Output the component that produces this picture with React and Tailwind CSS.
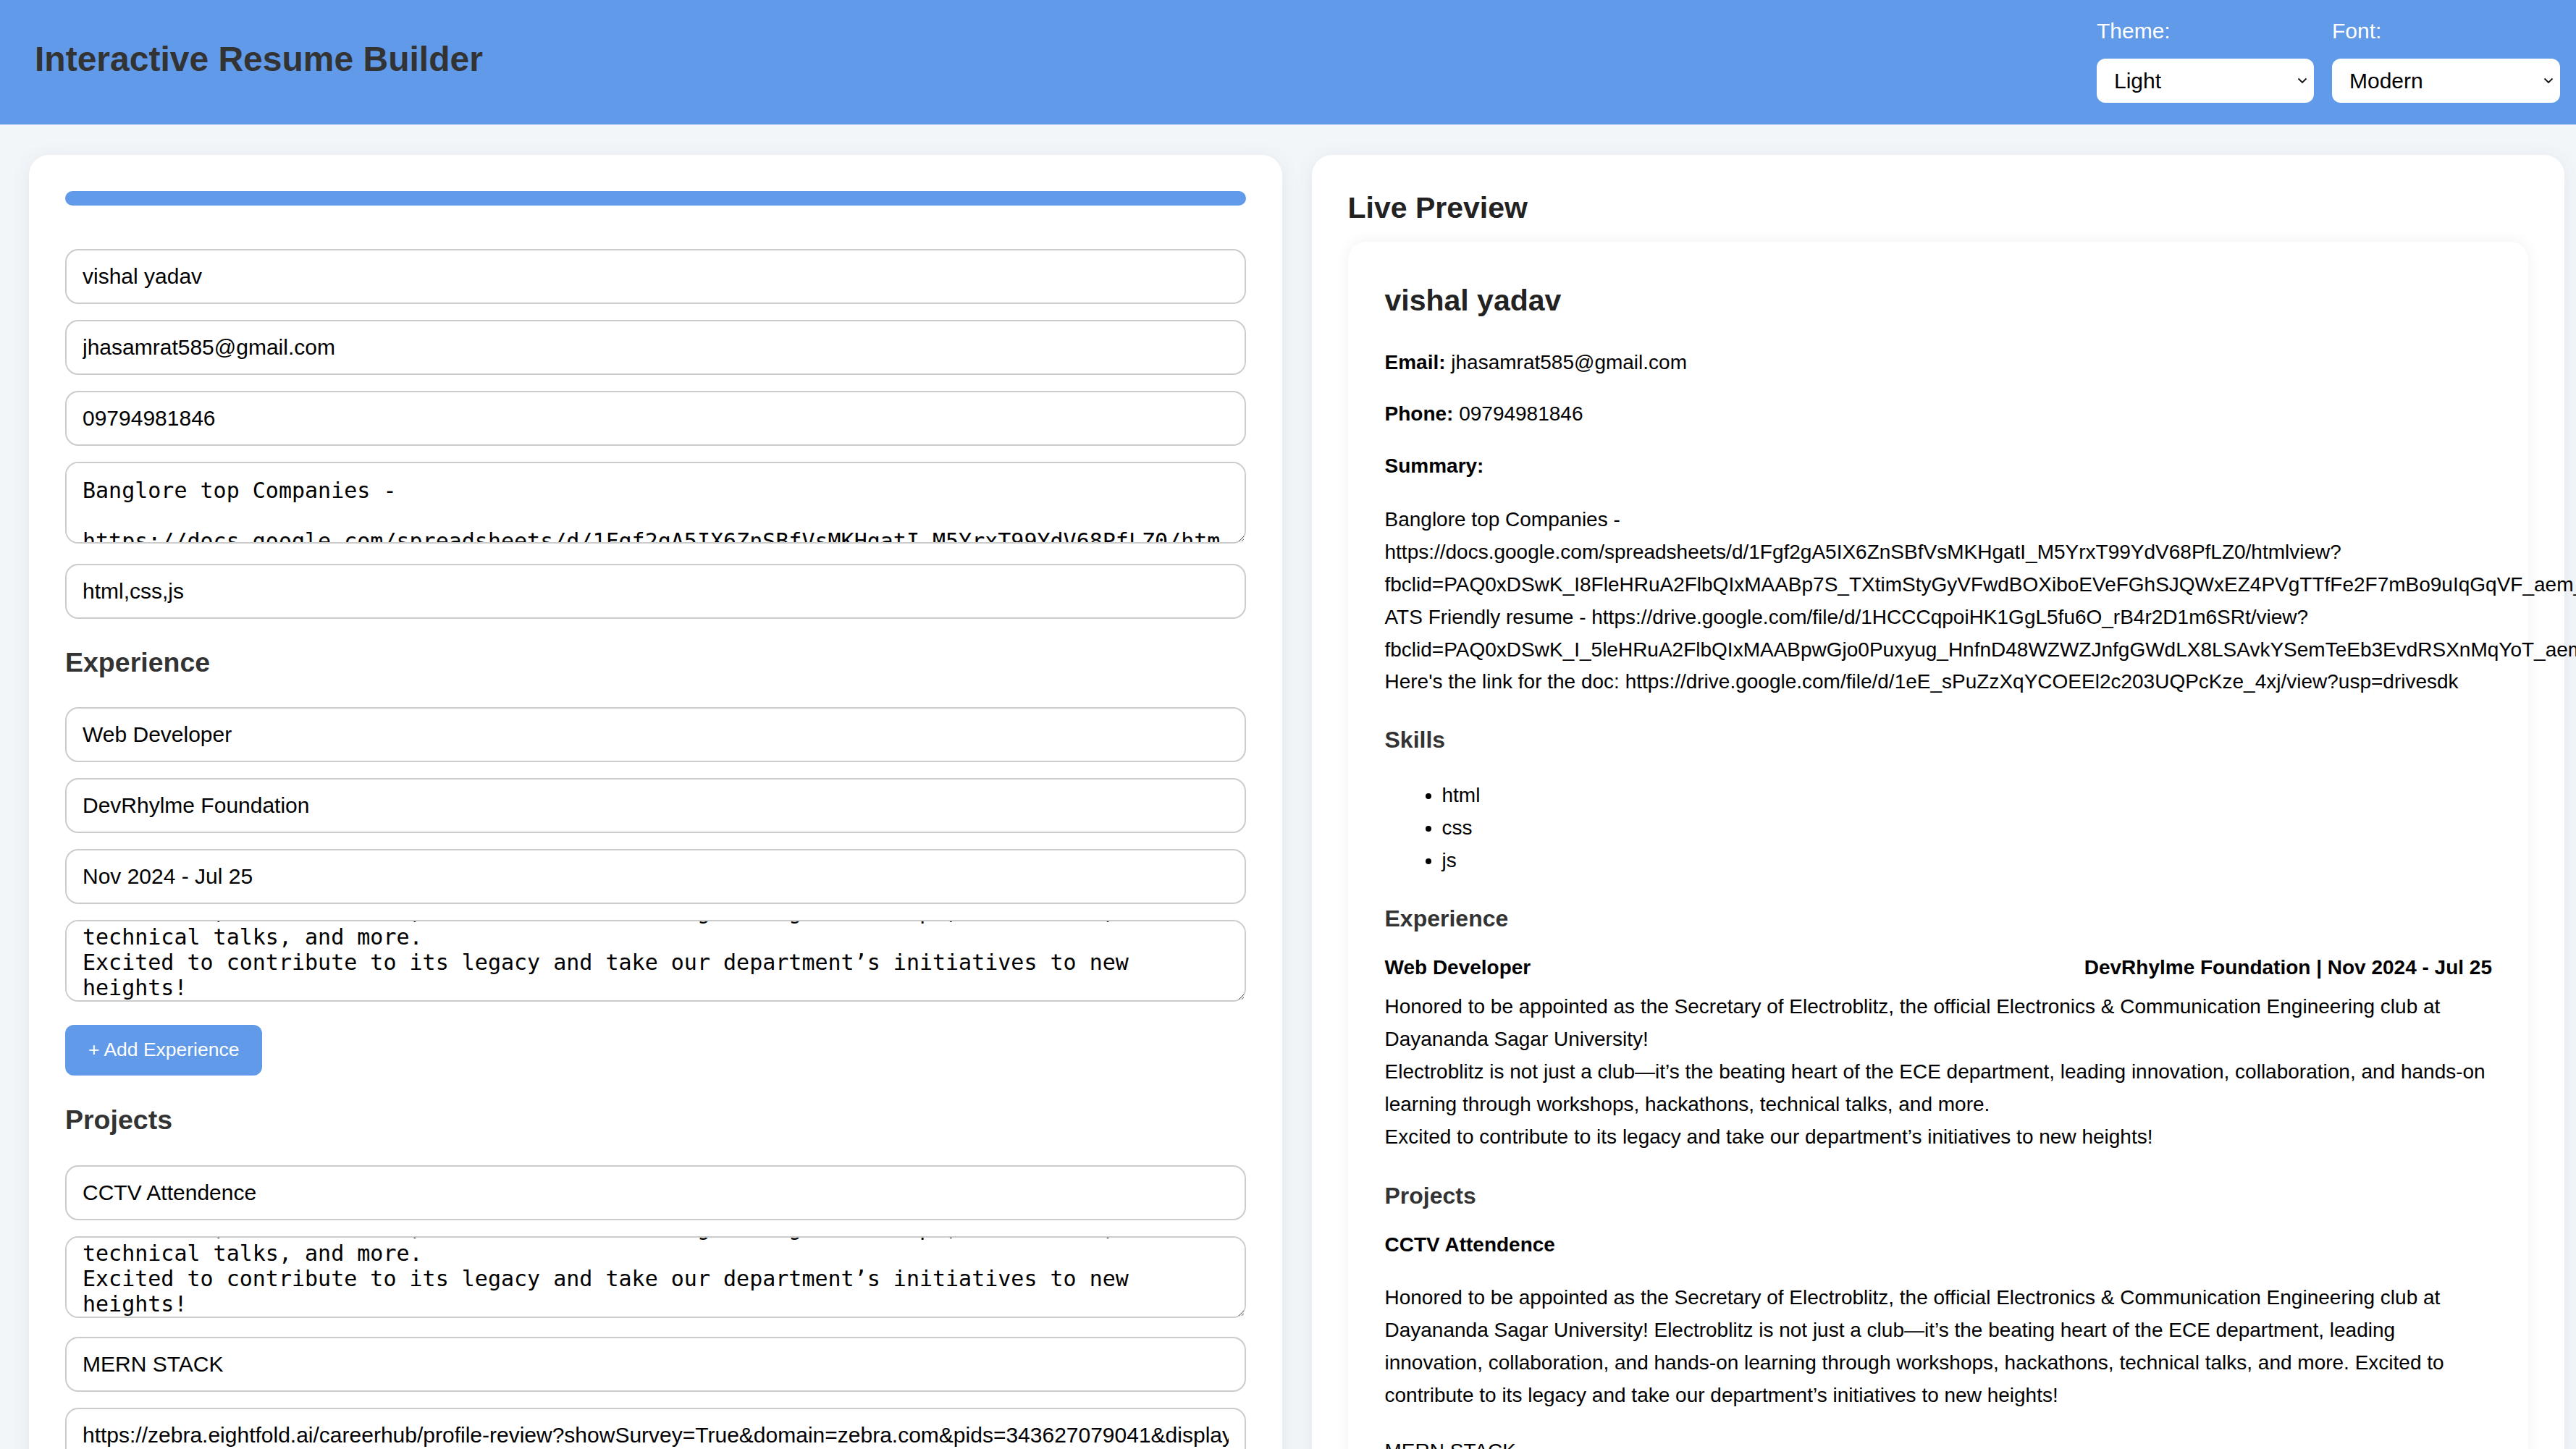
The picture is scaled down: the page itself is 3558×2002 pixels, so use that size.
import React, { useEffect, useRef } from 'react';

const blue = 'bg-[#609ae8]';

const expDesc =
  'Honored to be appointed as the Secretary of Electroblitz, the official Electronics & Communication Engineering club at Dayananda Sagar University!\nElectroblitz is not just a club\u2014it\u2019s the beating heart of the ECE department, leading innovation, collaboration, and hands-on learning through workshops, hackathons, technical talks, and more.\nExcited to contribute to its legacy and take our department\u2019s initiatives to new heights!';

const summaryLines = [
  'Banglore top Companies -',
  'https://docs.google.com/spreadsheets/d/1Fgf2gA5IX6ZnSBfVsMKHgatI_M5YrxT99YdV68PfLZ0/htmlview?',
  'fbclid=PAQ0xDSwK_I8FleHRuA2FlbQIxMAABp7S_TXtimStyGyVFwdBOXiboEVeFGhSJQWxEZ4PVgTTfFe2F7mBo9uIqGqVF_aem_Xk2Lq8ZpRt4mWn',
  'ATS Friendly resume - https://drive.google.com/file/d/1HCCCqpoiHK1GgL5fu6O_rB4r2D1m6SRt/view?',
  'fbclid=PAQ0xDSwK_I_5leHRuA2FlbQIxMAABpwGjo0Puxyug_HnfnD48WZWZJnfgGWdLX8LSAvkYSemTeEb3EvdRSXnMqYoT_aem_Vb7QdN3hJk',
  "Here's the link for the doc: https://drive.google.com/file/d/1eE_sPuZzXqYCOEEl2c203UQPcKze_4xj/view?usp=drivesdk",
];

const summaryText =
  'Banglore top Companies - \n\nhttps://docs.google.com/spreadsheets/d/1Fgf2gA5IX6ZnSBfVsMKHgatI_M5YrxT99YdV68PfLZ0/htmlview?fbclid=PAQ0xDSwK_I8FleHRuA2FlbQIxMAABp7S_TXtimStyGyVFwdBOXiboEVeFGhSJQWxEZ4PVgTTfFe2F7mBo9uIqGqVF_aem';

const Field = ({ value, className = '' }) => (
  <input
    type="text"
    defaultValue={value}
    className={`block w-full h-[76px] border-2 border-[#cccccc] rounded-[18px] px-[22px] text-[30px] text-black bg-white outline-none ${className}`}
  />
);

const Area = ({ value, bottom, className = '' }) => {
  const ref = useRef(null);
  useEffect(() => {
    if (bottom && ref.current) ref.current.scrollTop = ref.current.scrollHeight;
  }, [bottom]);
  return (
    <textarea
      ref={ref}
      defaultValue={value}
      className={`block w-full h-[113px] border-2 border-[#cccccc] rounded-[18px] px-[22px] pt-[20px] pb-0 text-[30px] leading-[35px] font-['DejaVu_Sans_Mono',monospace] text-black bg-white outline-none ${className}`}
    />
  );
};

const Dropdown = ({ label, value, options, width }) => (
  <div className="flex flex-col">
    <label className="text-[30px] leading-[34px] text-white mb-[21px]">{label}</label>
    <div className={`relative h-[61px] ${width}`}>
      <select
        defaultValue={value}
        className="appearance-none w-full h-full rounded-[12px] bg-white pl-[24px] text-[30px] text-black outline-none"
      >
        {options.map((o) => (
          <option key={o}>{o}</option>
        ))}
      </select>
      <svg
        className="absolute right-[9px] top-[26px] pointer-events-none"
        width="14"
        height="9"
        viewBox="0 0 14 9"
        fill="none"
      >
        <path d="M1.5 1.5 L7 7 L12.5 1.5" stroke="#111" strokeWidth="1.8" />
      </svg>
    </div>
  </div>
);

export default function App() {
  return (
    <div className="h-screen overflow-hidden bg-[#f3f6f9] font-['Liberation_Sans',Arial,sans-serif]">
      {/* Header */}
      <header className={`h-[172px] ${blue} flex items-center justify-between pl-[48px] pr-[22px]`}>
        <h1 className="text-[48px] leading-[56px] font-bold text-[#333333] mb-[8px]">
          Interactive Resume Builder
        </h1>
        <div className="flex gap-[25px] mb-[4px]">
          <Dropdown label="Theme:" value="Light" options={['Light', 'Dark']} width="w-[300px]" />
          <Dropdown label="Font:" value="Modern" options={['Modern', 'Classic']} width="w-[315px]" />
        </div>
      </header>

      <div className="grid grid-cols-2 gap-[41px] pl-[40px] pr-[16px] pt-[42px] items-start">
        {/* Editor */}
        <div className="bg-white rounded-[28px] px-[50px] pt-[50px] pb-[50px] shadow-[0_4px_28px_rgba(30,50,80,0.08)]">
          <div className={`h-[20px] rounded-full ${blue} mb-[60px]`} />
          <Field value="vishal yadav" />
          <Field value="jhasamrat585@gmail.com" className="mt-[22px]" />
          <Field value="09794981846" className="mt-[22px]" />
          <Area value={summaryText} className="mt-[22px]" />
          <Field value="html,css,js" className="mt-[28px]" />

          <h3 className="mt-[39px] mb-[40px] text-[37.5px] leading-[43px] font-bold text-[#333333]">
            Experience
          </h3>
          <Field value="Web Developer" />
          <Field value="DevRhylme Foundation" className="mt-[22px]" />
          <Field value="Nov 2024 - Jul 25" className="mt-[22px]" />
          <Area value={expDesc} bottom className="mt-[22px]" />
          <button
            className={`mt-[32px] h-[70px] px-[32px] rounded-[12px] ${blue} text-white text-[26.5px]`}
          >
            + Add Experience
          </button>

          <h3 className="mt-[40px] mb-[41px] text-[37.5px] leading-[43px] font-bold text-[#333333]">
            Projects
          </h3>
          <Field value="CCTV Attendence" />
          <Area value={expDesc} bottom className="mt-[22px]" />
          <Field value="MERN STACK" className="mt-[26px]" />
          <Field
            value="https://zebra.eightfold.ai/careerhub/profile-review?showSurvey=True&domain=zebra.com&pids=343627079041&displayFromCareerHub=true"
            className="mt-[22px]"
          />
        </div>

        {/* Preview */}
        <div className="bg-white rounded-[28px] pt-[50px] px-[50px] pb-[50px] shadow-[0_4px_28px_rgba(30,50,80,0.08)]">
          <h2 className="text-[41px] leading-[47px] font-bold text-[#222222] mb-[23px]">Live Preview</h2>
          <div className="rounded-[25px] bg-white shadow-[0_0_22px_rgba(0,0,0,0.06)] pt-[58px] pl-[51px] pr-[50px] pb-[50px] text-[28px] leading-[44.8px] text-black">
            <h1 className="text-[41px] leading-[47px] font-bold text-[#222222] mb-[40px]">vishal yadav</h1>
            <p className="mb-[26px]">
              <strong>Email:</strong> jhasamrat585@gmail.com
            </p>
            <p className="mb-[27px]">
              <strong>Phone:</strong> 09794981846
            </p>
            <p className="mb-[30px]">
              <strong>Summary:</strong>
            </p>
            <div>
              {summaryLines.map((l, i) => (
                <div key={i} className="whitespace-nowrap">
                  {l}
                </div>
              ))}
            </div>

            <h3 className="mt-[39px] text-[32px] leading-[37px] font-bold text-[#333333]">Skills</h3>
            <ul className="mt-[36px] list-disc pl-[79px]">
              <li>html</li>
              <li>css</li>
              <li>js</li>
            </ul>

            <h3 className="mt-[39px] text-[32px] leading-[37px] font-bold text-[#333333]">Experience</h3>
            <div className="mt-[27px] flex justify-between font-bold">
              <span>Web Developer</span>
              <span>DevRhylme Foundation | Nov 2024 - Jul 25</span>
            </div>
            <p className="mt-[10px] whitespace-pre-line">{expDesc}</p>

            <h3 className="mt-[41px] text-[32px] leading-[37px] font-bold text-[#333333]">Projects</h3>
            <p className="mt-[27px] font-bold">CCTV Attendence</p>
            <p className="mt-[28px]">{expDesc}</p>
            <p className="mt-[33px]">MERN STACK</p>
          </div>
        </div>
      </div>
    </div>
  );
}
